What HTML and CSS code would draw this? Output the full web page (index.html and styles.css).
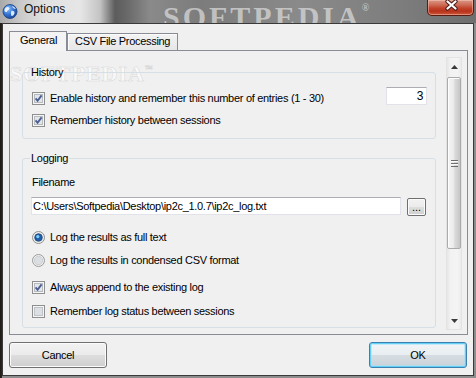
FILE: index.html
```html
<!DOCTYPE html>
<html>
<head>
<meta charset="utf-8">
<title>Options</title>
<link rel="stylesheet" href="styles.css">
</head>
<body>
<div class="window">
  <div class="titlebar">
    <svg class="app-icon" width="16" height="16" viewBox="0 0 16 16">
      <defs>
        <radialGradient id="globe" cx="0.35" cy="0.3" r="0.8">
          <stop offset="0" stop-color="#8fc4ff"/>
          <stop offset="0.55" stop-color="#2f6fd0"/>
          <stop offset="1" stop-color="#143f8c"/>
        </radialGradient>
      </defs>
      <circle cx="8" cy="8.5" r="7" fill="url(#globe)" stroke="#17407f" stroke-width="0.8"/>
      <path d="M4 4.5 C5.5 3.5 7 4 7.5 5.5 C7 7 5.5 7 5 8.5 C4.5 9.5 3 9 2.5 7.5 C2.6 6.2 3.2 5.2 4 4.5 Z" fill="#e9f2ff"/>
      <path d="M9.5 8 C11 7.5 12.5 8.5 12.5 10 C12 12 10.5 13.5 9.5 13 C9 11.5 8.5 9.5 9.5 8 Z" fill="#dbe9ff"/>
      <path d="M10 3 C11.5 3.3 13 4.5 13.8 6 C12.5 6.2 11 5.5 10 3 Z" fill="#dbe9ff"/>
    </svg>
    <span class="title">Options</span>
    <span class="title-mark">SOFTPEDIA<sup>®</sup></span>
    <div class="close">
      <svg width="47" height="16" viewBox="0 0 47 16">
        <path d="M20.5 2.5 L28.5 9.5 M28.5 2.5 L20.5 9.5" stroke="#4a1d16" stroke-width="4.2" stroke-linecap="round"/>
        <path d="M20.5 2.5 L28.5 9.5 M28.5 2.5 L20.5 9.5" stroke="#ffffff" stroke-width="2.2" stroke-linecap="round"/>
      </svg>
    </div>
  </div>

  <div class="client">
    <div class="tabs">
      <div class="tab active">General</div>
      <div class="tab">CSV File Processing</div>
    </div>

    <div class="tabpanel">
      <span class="panel-mark">SOFTPEDIA<sup>™</sup></span>
      <div class="scrollview">
        <div class="content">
          <fieldset class="group history">
            <legend>History</legend>
            <div class="row entries">
              <div class="opt">
                <svg class="box" width="13" height="13" viewBox="0 0 13 13"><rect x="0.5" y="0.5" width="12" height="12" fill="#f5f5f5" stroke="#8e8f8f"/><rect x="2.5" y="2.5" width="8" height="8" fill="#e3e5e8" stroke="#b7bbc0"/><path d="M3.6 6.4 L5.6 8.8 L9.6 3.4" fill="none" stroke="#4b5f95" stroke-width="1.9"/></svg>
                <span>Enable history and remember this number of entries (1 - 30)</span>
              </div>
              <div class="field num">3</div>
            </div>
            <div class="row second">
              <div class="opt">
                <svg class="box" width="13" height="13" viewBox="0 0 13 13"><rect x="0.5" y="0.5" width="12" height="12" fill="#f5f5f5" stroke="#8e8f8f"/><rect x="2.5" y="2.5" width="8" height="8" fill="#e3e5e8" stroke="#b7bbc0"/><path d="M3.6 6.4 L5.6 8.8 L9.6 3.4" fill="none" stroke="#4b5f95" stroke-width="1.9"/></svg>
                <span>Remember history between sessions</span>
              </div>
            </div>
          </fieldset>

          <fieldset class="group logging">
            <legend>Logging</legend>
            <div class="caption">Filename</div>
            <div class="file-row">
              <div class="field path">C:\Users\Softpedia\Desktop\ip2c_1.0.7\ip2c_log.txt</div>
              <div class="btn browse">...</div>
            </div>
            <div class="row r1">
              <div class="opt">
                <svg class="box" width="13" height="13" viewBox="0 0 13 13"><circle cx="6.5" cy="6.5" r="6" fill="#eeeeee" stroke="#8e8f8f"/><circle cx="6.5" cy="6.5" r="3.8" fill="#1d5fae" stroke="#24436b" stroke-width="0.8"/><circle cx="5.8" cy="5.6" r="1.6" fill="#7fd0fa"/></svg>
                <span>Log the results as full text</span>
              </div>
            </div>
            <div class="row r2">
              <div class="opt">
                <svg class="box" width="13" height="13" viewBox="0 0 13 13"><circle cx="6.5" cy="6.5" r="6" fill="#f0f0f0" stroke="#9a9b9b"/><circle cx="6.5" cy="6.5" r="4.2" fill="#dcdfe2" stroke="#c4c7cb" stroke-width="0.8"/></svg>
                <span>Log the results in condensed CSV format</span>
              </div>
            </div>
            <div class="row r3">
              <div class="opt">
                <svg class="box" width="13" height="13" viewBox="0 0 13 13"><rect x="0.5" y="0.5" width="12" height="12" fill="#f5f5f5" stroke="#8e8f8f"/><rect x="2.5" y="2.5" width="8" height="8" fill="#e3e5e8" stroke="#b7bbc0"/><path d="M3.6 6.4 L5.6 8.8 L9.6 3.4" fill="none" stroke="#4b5f95" stroke-width="1.9"/></svg>
                <span>Always append to the existing log</span>
              </div>
            </div>
            <div class="row r4">
              <div class="opt">
                <svg class="box" width="13" height="13" viewBox="0 0 13 13"><rect x="0.5" y="0.5" width="12" height="12" fill="#f5f5f5" stroke="#8e8f8f"/><rect x="2.5" y="2.5" width="8" height="8" fill="#dcdfe3" stroke="#bfc3c8"/></svg>
                <span>Remember log status between sessions</span>
              </div>
            </div>
          </fieldset>
        </div>

        <div class="scrollbar">
          <div class="sb-arrow"><svg width="7" height="4" viewBox="0 0 7 4"><path d="M0 4 L3.5 0 L7 4 Z" fill="#3a3a3a"/></svg></div>
          <div class="sb-track">
            <div class="sb-thumb"><span class="grip"></span></div>
          </div>
          <div class="sb-arrow"><svg width="7" height="4" viewBox="0 0 7 4"><path d="M0 0 L7 0 L3.5 4 Z" fill="#3a3a3a"/></svg></div>
        </div>
      </div>
    </div>

    <div class="buttons">
      <div class="btn cancel">Cancel</div>
      <div class="btn ok">OK</div>
    </div>
  </div>
</div>
</body>
</html>
```

FILE: styles.css
```css
html, body {
  margin: 0;
  padding: 0;
}

body {
  width: 476px;
  height: 378px;
  overflow: hidden;
  background: linear-gradient(to right, #1c1a12 0, #2a2820 2px, #8d8d8d 2px, #8d8d8d 100%);
  font-family: "Liberation Sans", Arial, sans-serif;
  font-size: 11px;
  color: #000;
}

.window {
  width: 476px;
  height: 378px;
}

/* ---------- title bar ---------- */
.titlebar {
  position: relative;
  height: 23px;
  display: flex;
  align-items: flex-start;
  overflow: hidden;
  background: linear-gradient(to right,
    #a9a9a9 0, #c9c9c9 20px, #e2e2e2 45px, #e6e6e6 80px, #c4c4c4 100px,
    #5c5c5c 115px, #6a6a6a 128px, #8a8a8a 150px, #7c7c7c 200px,
    #8a8a8a 300px, #7d7d7d 400px, #6f6f6f 476px);
}

.app-icon {
  flex: none;
  margin: 3px 0 0 2px;
}

.title {
  position: relative;
  z-index: 1;
  margin-left: 6px;
  font-size: 12px;
  line-height: 19px;
  color: #111;
}

.title-mark {
  position: absolute;
  left: 163px;
  top: -7px;
  font-family: "Liberation Serif", "Times New Roman", serif;
  font-weight: bold;
  font-size: 30px;
  line-height: 30px;
  letter-spacing: 3px;
  color: rgba(215, 215, 215, 0.75);
  white-space: nowrap;
}

.title-mark sup {
  font-size: 10px;
  vertical-align: 16px;
}

.close {
  flex: none;
  margin-left: auto;
  margin-right: 2px;
  width: 47px;
  height: 16px;
  box-sizing: border-box;
  border: 1px solid #5a1a10;
  border-top: none;
  border-radius: 0 0 5px 5px;
  background: linear-gradient(#d99786 0, #cf6f5a 30%, #c1422a 55%, #b8321c 75%, #cc5a3c 100%);
  box-shadow: inset 0 0 0 1px rgba(255, 210, 200, 0.45);
}

.close svg {
  display: block;
  margin: -1px 0 0 -1px;
}

/* ---------- client ---------- */
.client {
  margin-left: 2px;
  width: 472px;
  height: 353px;
  box-sizing: border-box;
  border: 1px solid #3a3a3a;
  background: #f0f0f0;
  padding: 7px 5px 0 6px;
  display: flex;
  flex-direction: column;
  letter-spacing: -0.3px;
}

/* ---------- tabs ---------- */
.tabs {
  flex: none;
  height: 20px;
  margin-bottom: -1px;
  display: flex;
  align-items: flex-start;
  position: relative;
  z-index: 1;
}

.tab {
  box-sizing: border-box;
  height: 17px;
  margin-top: 2px;
  padding: 1px 0 0 7px;
  width: 111px;
  line-height: 13px;
  border: 1px solid #898c95;
  border-bottom: none;
  background: linear-gradient(#f3f3f3, #e7e7e7);
  box-shadow: inset 1px 1px 0 #fbfbfb;
  white-space: nowrap;
}

.tab.active {
  width: 58px;
  height: 20px;
  margin-top: 0;
  padding: 2px 0 0 10px;
  background: #f3f3f3;
  box-shadow: none;
}

.tabpanel {
  flex: none;
  position: relative;
  height: 285px;
  box-sizing: border-box;
  border: 1px solid #898c95;
  background: #f0f0f0;
  display: flex;
}

.panel-mark {
  position: absolute;
  left: 0;
  top: 10px;
  font-family: "Liberation Serif", "Times New Roman", serif;
  font-weight: bold;
  font-size: 22px;
  letter-spacing: 1px;
  color: rgba(252, 252, 252, 0.8);
  -webkit-text-stroke: 0.5px rgba(200, 200, 200, 0.7);
  white-space: nowrap;
}

.panel-mark sup {
  font-size: 8px;
  vertical-align: 10px;
}

.scrollview {
  position: relative;
  flex: 1;
  margin: 6px 5px 4px 3px;
  display: flex;
  min-width: 0;
}

.content {
  flex: 1;
  min-width: 0;
  overflow: hidden;
}

/* ---------- group boxes ---------- */
.group {
  margin: 8px 10px 0 9px;
  padding: 0 8px 0 9px;
  border: 1px solid #d5dfe5;
  border-radius: 3px;
  min-inline-size: 0;
}

.group legend {
  margin-left: -2px;
  padding: 0 1px;
  line-height: 14px;
}

.history {
  padding-bottom: 11px;
}

.logging {
  margin-top: 12px;
  padding-bottom: 9px;
}

.row {
  display: flex;
}

.entries {
  margin-top: 8px;
  align-items: flex-end;
  justify-content: space-between;
}

.second {
  margin-top: 9px;
}

.opt {
  display: flex;
  align-items: center;
  gap: 5px;
  height: 13px;
  line-height: 13px;
  white-space: nowrap;
}

.box {
  flex: none;
  display: block;
}

.field {
  box-sizing: border-box;
  height: 18px;
  line-height: 16px;
  background: #fff;
  border: 1px solid #e2e3ea;
  border-top-color: #abadb3;
  white-space: nowrap;
  overflow: hidden;
}

.num {
  width: 41px;
  padding-right: 3px;
  text-align: right;
  font-size: 12px;
}

.caption {
  margin-top: 11px;
  line-height: 13px;
}

.file-row {
  margin-top: 8px;
  display: flex;
  align-items: flex-start;
}

.path {
  width: 370px;
  margin-left: -1px;
  padding-left: 1px;
}

.r1 { margin-top: 15px; }
.r2 { margin-top: 10px; }
.r3 { margin-top: 14px; }
.r4 { margin-top: 11px; }

/* ---------- buttons ---------- */
.btn {
  box-sizing: border-box;
  border: 1px solid #707070;
  border-radius: 3px;
  background: linear-gradient(#f2f2f2 0, #ebebeb 48%, #dddddd 52%, #cfcfcf 100%);
  box-shadow: inset 0 0 0 1px #fbfbfb;
  text-align: center;
}

.browse {
  width: 19px;
  height: 18px;
  margin: 1px 0 0 6px;
  line-height: 16px;
  border-radius: 2px;
  letter-spacing: 0;
}

.buttons {
  flex: none;
  margin-top: 7px;
  padding-right: 1px;
  display: flex;
  justify-content: space-between;
}

.buttons .btn {
  width: 98px;
  height: 26px;
  line-height: 24px;
}

.btn.ok {
  border-color: #3c7fb1;
  background: linear-gradient(#f1f4f6 0, #e8eef2 48%, #d6dde2 52%, #c9d2d8 100%);
  box-shadow: inset 0 0 0 1px #62cff6, inset 0 0 0 2px rgba(160, 225, 250, 0.55);
}

/* ---------- scrollbar ---------- */
.scrollbar {
  flex: none;
  width: 16px;
  box-sizing: border-box;
  border: 1px solid #e3e3e3;
  background: linear-gradient(to right, #e6e6e6 0, #f2f2f2 25%, #f4f4f4 75%, #ebebeb 100%);
  display: flex;
  flex-direction: column;
}

.sb-arrow {
  flex: none;
  height: 17px;
  display: flex;
  align-items: center;
  justify-content: center;
}

.sb-arrow svg {
  display: block;
}

.sb-track {
  flex: 1;
  display: flex;
  flex-direction: column;
}

.sb-thumb {
  margin-top: 2px;
  height: 172px;
  box-sizing: border-box;
  border: 1px solid #ababab;
  border-radius: 2px;
  background: linear-gradient(to right, #f4f4f4 0, #ececec 45%, #dcdcdc 55%, #c6c6c6 100%);
  box-shadow: inset 1px 1px 0 #fdfdfd;
  display: flex;
  align-items: center;
  justify-content: center;
}

.grip {
  display: block;
  width: 7px;
  height: 7px;
  background: repeating-linear-gradient(#6d6d6d 0, #6d6d6d 1px, #fafafa 1px, #fafafa 2px, transparent 2px, transparent 3px);
  margin-top: 1px;
}
```
